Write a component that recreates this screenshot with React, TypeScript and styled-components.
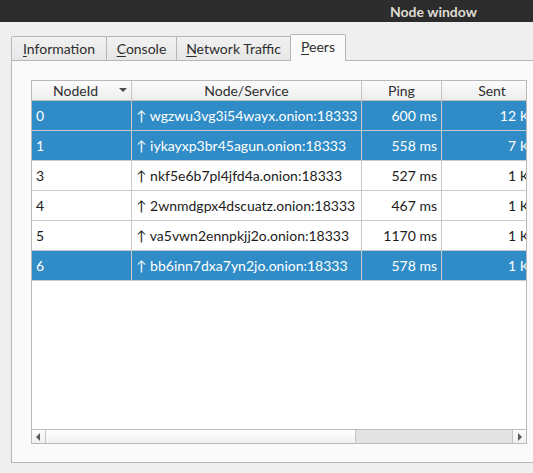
import React from 'react';
import styled, { createGlobalStyle } from 'styled-components';

const GlobalStyle = createGlobalStyle`
  html, body {
    margin: 0;
    padding: 0;
    background: #efefef;
    font-family: Lato, 'Noto Sans', sans-serif;
    font-size: 14px;
    color: #2e2e2e;
  }
`;

type Column = {
  key: string;
  title: string;
  width: number;
  align: 'left' | 'right';
};

type Peer = {
  id: number;
  address: string;
  ping: number;
  sent: string;
  received: string;
  agent: string;
  selected: boolean;
};

const columns: Column[] = [
  { key: 'id', title: 'NodeId', width: 100, align: 'left' },
  { key: 'address', title: 'Node/Service', width: 230, align: 'left' },
  { key: 'ping', title: 'Ping', width: 80, align: 'right' },
  { key: 'sent', title: 'Sent', width: 101, align: 'right' },
  { key: 'received', title: 'Received', width: 96, align: 'right' },
  { key: 'agent', title: 'User Agent', width: 136, align: 'left' },
];

const peers: Peer[] = [
  { id: 0, address: 'wgzwu3vg3i54wayx.onion:18333', ping: 600, sent: '12 KB', received: '41 KB', agent: '/Satoshi:0.20.1/', selected: true },
  { id: 1, address: 'iykayxp3br45agun.onion:18333', ping: 558, sent: '7 KB', received: '25 KB', agent: '/Satoshi:0.19.1/', selected: true },
  { id: 3, address: 'nkf5e6b7pl4jfd4a.onion:18333', ping: 527, sent: '1 KB', received: '3 KB', agent: '/Satoshi:0.20.0/', selected: false },
  { id: 4, address: '2wnmdgpx4dscuatz.onion:18333', ping: 467, sent: '1 KB', received: '3 KB', agent: '/Satoshi:0.18.0/', selected: false },
  { id: 5, address: 'va5vwn2ennpkjj2o.onion:18333', ping: 1170, sent: '1 KB', received: '2 KB', agent: '/Satoshi:0.20.1/', selected: false },
  { id: 6, address: 'bb6inn7dxa7yn2jo.onion:18333', ping: 578, sent: '1 KB', received: '2 KB', agent: '/Satoshi:0.21.0/', selected: true },
];

const tabs = [
  { label: 'Information', width: 96 },
  { label: 'Console', width: 71 },
  { label: 'Network Traffic', width: 115 },
  { label: 'Peers', width: 56 },
];

const TitleBar = styled.div`
  height: 22px;
  background: #2c2c2c;
  color: #dfdbd2;
  font-weight: bold;
  font-size: 14px;
  display: flex;
  align-items: center;
  padding-left: 390px;
`;

const Body = styled.div`
  padding: 12px 0 0 11px;
  height: 451px;
  box-sizing: border-box;
`;

const TabBar = styled.div`
  display: flex;
  align-items: flex-end;
  height: 26px;
`;

const Tab = styled.div<{ $active?: boolean; $width: number }>`
  position: relative;
  box-sizing: border-box;
  flex: 0 0 ${(p) => p.$width}px;
  height: ${(p) => (p.$active ? '27px' : '24px')};
  margin-bottom: ${(p) => (p.$active ? '-1px' : '0')};
  margin-left: -1px;
  padding-bottom: ${(p) => (p.$active ? '3px' : '0')};
  display: flex;
  align-items: center;
  justify-content: center;
  border: 1px solid #b6b6b6;
  border-bottom: none;
  border-radius: 2px 2px 0 0;
  background: ${(p) =>
    p.$active ? '#fafafa' : 'linear-gradient(#f1f1f1, #e7e7e7)'};
  z-index: ${(p) => (p.$active ? 1 : 0)};
  color: #2e2e2e;
  white-space: nowrap;

  &:first-child {
    margin-left: 0;
  }

  u {
    text-decoration-thickness: 1px;
    text-underline-offset: 2px;
  }
`;

const Pane = styled.div`
  box-sizing: border-box;
  height: 403px;
  border: 1px solid #b6b6b6;
  border-right: none;
  background: #fafafa;
  padding: 19px 0 0 19px;
`;

const TableFrame = styled.div`
  box-sizing: border-box;
  width: 496px;
  height: 364px;
  border: 1px solid #b9b9b9;
  display: flex;
  flex-direction: column;
  background: #fff;
`;

const Viewport = styled.div`
  flex: 1;
  overflow: hidden;
`;

const Row = styled.div<{ $selected?: boolean }>`
  display: flex;
  height: 30px;
  box-sizing: border-box;
  border-bottom: 1px solid #c9c9c9;
  background: ${(p) => (p.$selected ? '#308cc6' : '#fff')};
  color: ${(p) => (p.$selected ? '#fff' : '#1c1c1c')};
`;

const HeaderRow = styled.div`
  display: flex;
  height: 20px;
`;

const HeaderCell = styled.div<{ $width: number }>`
  flex: 0 0 ${(p) => p.$width}px;
  box-sizing: border-box;
  height: 20px;
  border-right: 1px solid #c6c6c6;
  border-bottom: 1px solid #bdbdbd;
  background: linear-gradient(#fcfcfc, #ededed);
  color: #2e2e2e;
  display: flex;
  align-items: center;
  justify-content: center;
  position: relative;
  white-space: nowrap;
`;

const HeaderLabel = styled.span<{ $sorted?: boolean }>`
  margin-right: ${(p) => (p.$sorted ? '12px' : '0')};
`;

const SortArrow = styled.svg`
  position: absolute;
  right: 4px;
  top: 7px;
`;

const Cell = styled.div<{ $width: number; $align: 'left' | 'right' }>`
  flex: 0 0 ${(p) => p.$width}px;
  box-sizing: border-box;
  border-right: 1px solid #c9c9c9;
  display: flex;
  align-items: center;
  justify-content: ${(p) => (p.$align === 'right' ? 'flex-end' : 'flex-start')};
  padding: 0 4px 0 4px;
  white-space: nowrap;
  overflow: hidden;
`;

const ScrollBar = styled.div`
  height: 14px;
  box-sizing: border-box;
  border-top: 1px solid #bcbcbc;
  display: flex;
  background: #e3e3e3;
`;

const ScrollButton = styled.div<{ $side: 'left' | 'right' }>`
  flex: 0 0 14px;
  box-sizing: border-box;
  background: linear-gradient(#fdfdfd, #f0f0f0);
  ${(p) =>
    p.$side === 'left'
      ? 'border-right: 1px solid #c4c4c4;'
      : 'border-left: 1px solid #c4c4c4;'}
  display: flex;
  align-items: center;
  justify-content: center;
`;

const Track = styled.div`
  flex: 1;
  display: flex;
`;

const Handle = styled.div`
  box-sizing: border-box;
  height: 100%;
  background: linear-gradient(#fefefe, #f1f1f1);
  border-right: 1px solid #c4c4c4;
`;

const ArrowIcon: React.FC<{ dir: 'left' | 'right' }> = ({ dir }) => (
  <svg width="5" height="8" viewBox="0 0 5 8">
    <path
      d={dir === 'left' ? 'M4 0 L0 4 L4 8 Z' : 'M1 0 L5 4 L1 8 Z'}
      fill="#5a5a5a"
    />
  </svg>
);

const renderCell = (peer: Peer, key: string) => {
  switch (key) {
    case 'id':
      return String(peer.id);
    case 'address':
      return `\u2191 ${peer.address}`;
    case 'ping':
      return `${peer.ping} ms`;
    case 'sent':
      return peer.sent;
    case 'received':
      return peer.received;
    default:
      return peer.agent;
  }
};

const App: React.FC = () => {
  const viewportWidth = 494;
  const contentWidth = columns.reduce((sum, c) => sum + c.width, 0);
  const trackWidth = viewportWidth - 28;
  const handleWidth = Math.round((viewportWidth / contentWidth) * trackWidth);

  return (
    <>
      <GlobalStyle />
      <TitleBar>Node window</TitleBar>
      <Body>
        <TabBar>
          {tabs.map((t) => (
            <Tab key={t.label} $width={t.width} $active={t.label === 'Peers'}>
              <span>
                <u>{t.label[0]}</u>
                {t.label.slice(1)}
              </span>
            </Tab>
          ))}
        </TabBar>
        <Pane>
          <TableFrame>
            <Viewport>
              <HeaderRow>
                {columns.map((c, i) => (
                  <HeaderCell key={c.key} $width={c.width}>
                    <HeaderLabel $sorted={i === 0}>{c.title}</HeaderLabel>
                    {i === 0 && (
                      <SortArrow width="8" height="4" viewBox="0 0 8 4">
                        <path d="M0 0 H8 L4 4 Z" fill="#4d4d4d" />
                      </SortArrow>
                    )}
                  </HeaderCell>
                ))}
              </HeaderRow>
              {peers.map((p) => (
                <Row key={p.id} $selected={p.selected}>
                  {columns.map((c) => (
                    <Cell key={c.key} $width={c.width} $align={c.align}>
                      {renderCell(p, c.key)}
                    </Cell>
                  ))}
                </Row>
              ))}
            </Viewport>
            <ScrollBar>
              <ScrollButton $side="left">
                <ArrowIcon dir="left" />
              </ScrollButton>
              <Track>
                <Handle style={{ width: handleWidth }} />
              </Track>
              <ScrollButton $side="right">
                <ArrowIcon dir="right" />
              </ScrollButton>
            </ScrollBar>
          </TableFrame>
        </Pane>
      </Body>
    </>
  );
};

export default App;
